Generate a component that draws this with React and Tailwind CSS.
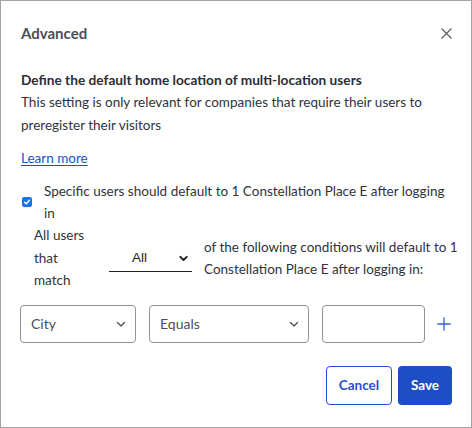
import React from "react";

function Chevron({ className = "" }) {
  return (
    <svg viewBox="0 0 12 12" className={className} fill="none" stroke="currentColor" strokeWidth="1.3" strokeLinecap="round" strokeLinejoin="round">
      <path d="M2.5 4.5 6 8l3.5-3.5" />
    </svg>
  );
}

export default function App() {
  return (
    <div
      className="w-[472px] h-[428px] border border-[#a3a3a3] bg-white text-[#30333a] text-[13.5px] overflow-hidden whitespace-nowrap"
      style={{ fontFamily: 'Lato, "Liberation Sans", sans-serif' }}
    >
      <div className="flex items-center justify-between pl-[20px] pr-[19px] pt-[20px] h-[44px]">
        <div className="text-[15px] font-bold text-[#4b4f58] leading-[22px]">Advanced</div>
        <svg viewBox="0 0 10 10" className="w-[11px] h-[11px] text-[#5b5f66]" fill="none" stroke="currentColor" strokeWidth="1.1">
          <path d="M0.5 0.5 9.5 9.5M9.5 0.5 0.5 9.5" />
        </svg>
      </div>

      <div className="pl-[20px] pr-[19px] pt-[24px]">
        <div className="font-bold text-[13.7px] leading-[22px] text-[#2b2e35]">Define the default home location of multi-location users</div>
        <div className="leading-[22.5px]">
          This setting is only relevant for companies that require their users to<br />preregister their visitors
        </div>
        <div className="mt-[11px] leading-[22px]">
          <a className="text-[#1f4fc9] underline underline-offset-2">Learn more</a>
        </div>

        <div className="mt-[11px] flex items-center">
          <div className="w-[23px] shrink-0 flex justify-start pl-[1px]">
            <div className="w-[10px] h-[10px] rounded-[2px] bg-[#1a73e8] flex items-center justify-center">
              <svg viewBox="0 0 10 10" className="w-[8px] h-[8px]" fill="none" stroke="white" strokeWidth="1.8" strokeLinecap="round" strokeLinejoin="round">
                <path d="M2 5.2 4.1 7.2 8 2.8" />
              </svg>
            </div>
          </div>
          <div className="leading-[22px]">
            Specific users should default to 1 Constellation Place E after logging<br />in
          </div>
        </div>

        <div className="flex items-center pl-[13px]">
          <div className="w-[75px] shrink-0 leading-[22.5px]">
            All users<br />that<br />match
          </div>
          <div className="w-[83px] shrink-0 h-[26px] flex items-center border-b border-[#222] relative top-[1px]">
            <span className="ml-[23px] text-[#222]" style={{ fontFamily: '"Liberation Sans", sans-serif' }}>All</span>
            <svg viewBox="0 0 12 12" className="ml-auto mr-[3px] w-[11px] h-[11px] text-[#222]" fill="none" stroke="currentColor" strokeWidth="2.2" strokeLinecap="round" strokeLinejoin="round">
              <path d="M2.5 4.2 6 7.6l3.5-3.4" />
            </svg>
          </div>
          <div className="ml-[12px] leading-[22px]">
            of the following conditions will default to 1<br />Constellation Place E after logging in:
          </div>
        </div>

        <div className="mt-[13px] -ml-[1px] flex items-center">
          <div className="w-[116px] shrink-0 h-[38px] rounded-[4px] border border-[#8f929a] flex items-center pl-[10px] pr-[8px] text-[#4b4f58] text-[14px]">
            <span>City</span>
            <Chevron className="ml-auto w-[12px] h-[12px] text-[#4b4f58]" />
          </div>
          <div className="ml-[13px] w-[160px] shrink-0 h-[38px] rounded-[4px] border border-[#8f929a] flex items-center pl-[10px] pr-[8px] text-[#4b4f58] text-[14px]">
            <span>Equals</span>
            <Chevron className="ml-auto w-[12px] h-[12px] text-[#4b4f58]" />
          </div>
          <div className="ml-[13px] w-[103px] shrink-0 h-[38px] rounded-[4px] border border-[#8f929a]" />
          <svg viewBox="0 0 14 14" className="ml-[12px] w-[14px] h-[14px] text-[#2f62d6]" fill="none" stroke="currentColor" strokeWidth="1.3">
            <path d="M7 0.5v13M0.5 7h13" />
          </svg>
        </div>

        <div className="mt-[23px] flex justify-end gap-[6px]">
          <div className="w-[66px] h-[39px] rounded-[4px] border border-[#1f4fc9] flex items-center justify-center text-[#1f4fc9] font-bold text-[13.5px]">
            Cancel
          </div>
          <div className="w-[54px] h-[39px] rounded-[4px] bg-[#1e4ec6] flex items-center justify-center text-white font-bold text-[13.5px]">
            Save
          </div>
        </div>
      </div>
    </div>
  );
}
